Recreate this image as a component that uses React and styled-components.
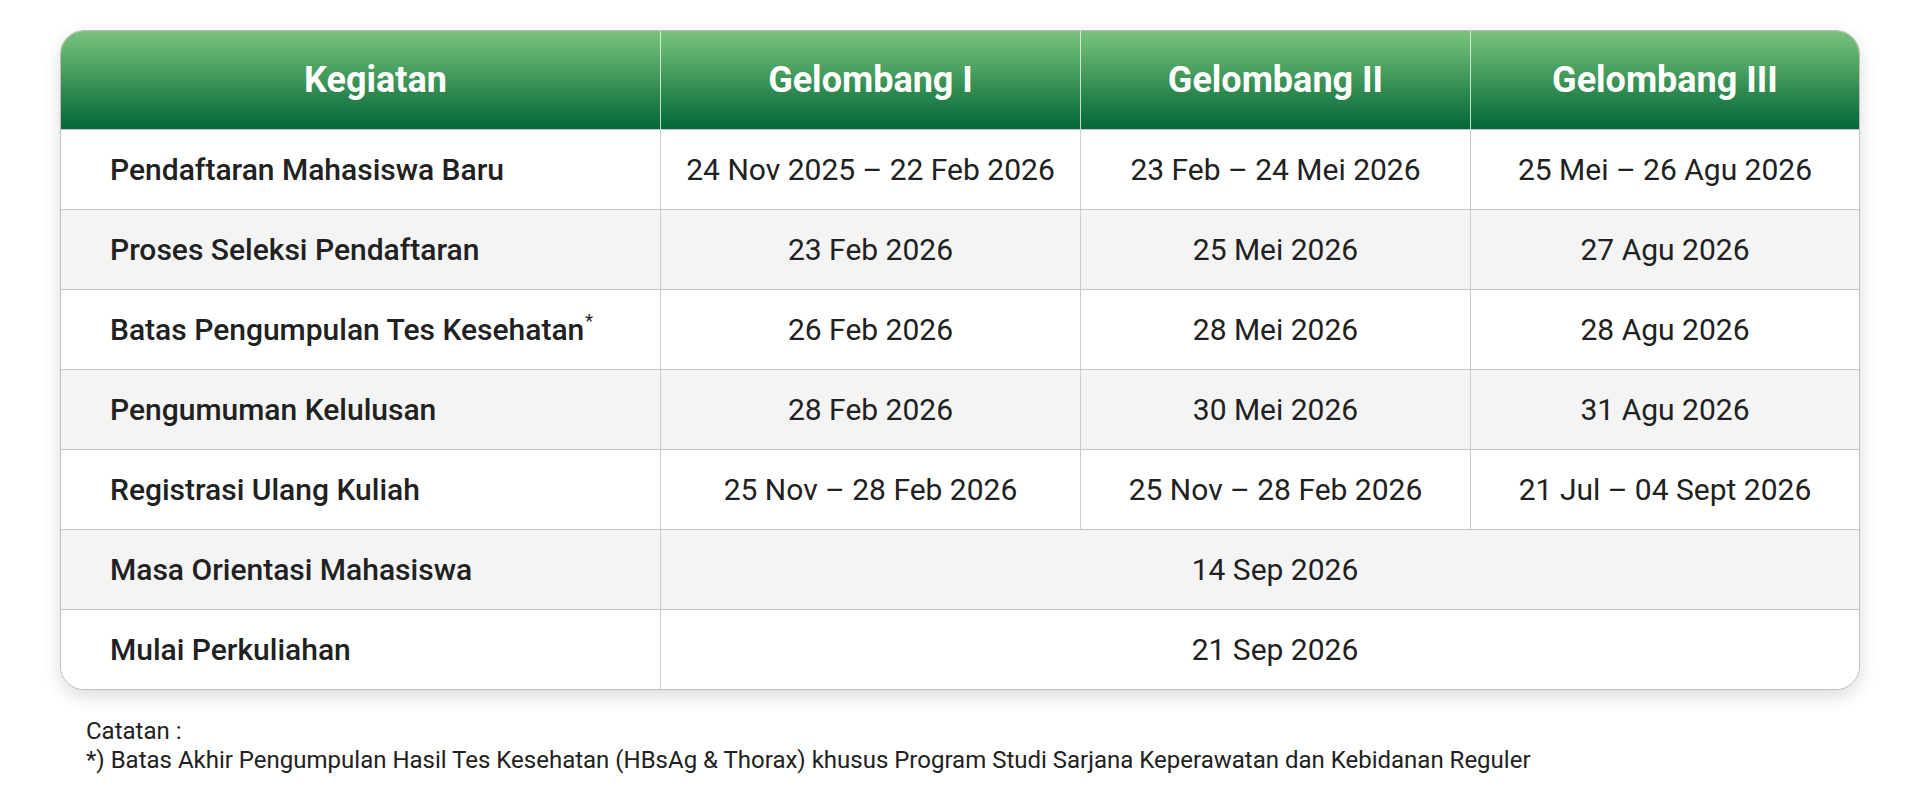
import React from "react";
import styled, { createGlobalStyle } from "styled-components";

const Global = createGlobalStyle`
  html, body { margin: 0; padding: 0; background: #ffffff; }
  body { font-family: Roboto, "Noto Sans", Arial, sans-serif; color: #212121; }
`;

const Page = styled.div`
  padding: 30px 60px 0 60px;
  width: 1800px;
`;

const Card = styled.div`
  border: 1px solid #bdbdbd;
  border-radius: 24px;
  overflow: hidden;
  background: #ffffff;
  box-shadow: 0 6px 18px rgba(0, 0, 0, 0.14);
`;

const Table = styled.table`
  width: 100%;
  border-collapse: separate;
  border-spacing: 0;
  table-layout: fixed;
`;

const HeadRow = styled.tr`
  height: 98px;
  background: linear-gradient(180deg, #7ac27c 0%, #4fa463 35%, #1f7d47 75%, #04663a 100%);
`;

const HeadCell = styled.th`
  padding: ${(p) => (p.$first ? "0 20px 0 50px" : "0 10px")};
  border-left: ${(p) => (p.$first ? "none" : "1px solid rgba(230, 240, 230, 0.85)")};
  color: #ffffff;
  font-family: Roboto, Arial, sans-serif;
  font-weight: 700;
  font-size: 36px;
  text-align: center;
  vertical-align: middle;
`;

const Row = styled.tr`
  height: 80px;
  background: ${(p) => (p.$alt ? "#f4f4f4" : "#ffffff")};
`;

const LabelCell = styled.td`
  padding: 0 20px 0 49px;
  border-top: 1px solid #c4c4c4;
  font-weight: 500;
  font-size: 30px;
  color: #212121;
  text-align: left;
  vertical-align: middle;
  white-space: nowrap;
`;

const DateCell = styled.td`
  padding: ${(p) => (p.$wide ? "0 20px 0 50px" : "0 10px")};
  border-top: 1px solid #c4c4c4;
  border-left: 1px solid #cccccc;
  font-weight: 400;
  font-size: 30px;
  color: #212121;
  text-align: center;
  vertical-align: middle;
  white-space: nowrap;
`;

const Star = styled.sup`
  font-size: 18px;
  font-weight: 400;
  vertical-align: top;
  position: relative;
  top: -2px;
  margin-left: 1px;
`;

const Notes = styled.div`
  padding: 27px 0 0 26px;
  font-size: 24px;
  line-height: 29px;
  color: #212121;
`;

const rows = [
  { label: "Pendaftaran Mahasiswa Baru", d: ["24 Nov 2025 – 22 Feb 2026", "23 Feb – 24 Mei 2026", "25 Mei – 26 Agu 2026"] },
  { label: "Proses Seleksi Pendaftaran", d: ["23 Feb 2026", "25 Mei 2026", "27 Agu 2026"] },
  { label: "Batas Pengumpulan Tes Kesehatan", star: true, d: ["26 Feb 2026", "28 Mei 2026", "28 Agu 2026"] },
  { label: "Pengumuman Kelulusan", d: ["28 Feb 2026", "30 Mei 2026", "31 Agu 2026"] },
  { label: "Registrasi Ulang Kuliah", d: ["25 Nov – 28 Feb 2026", "25 Nov – 28 Feb 2026", "21 Jul – 04 Sept 2026"] },
  { label: "Masa Orientasi Mahasiswa", all: "14 Sep 2026" },
  { label: "Mulai Perkuliahan", all: "21 Sep 2026" },
];

export default function App() {
  return (
    <>
      <Global />
      <Page>
        <Card>
          <Table>
            <colgroup>
              <col style={{ width: "599px" }} />
              <col style={{ width: "420px" }} />
              <col style={{ width: "390px" }} />
              <col style={{ width: "389px" }} />
            </colgroup>
            <thead>
              <HeadRow>
                <HeadCell $first>Kegiatan</HeadCell>
                <HeadCell>Gelombang I</HeadCell>
                <HeadCell>Gelombang II</HeadCell>
                <HeadCell>Gelombang III</HeadCell>
              </HeadRow>
            </thead>
            <tbody>
              {rows.map((r, i) => (
                <Row key={r.label} $alt={i % 2 === 1}>
                  <LabelCell>
                    {r.label}
                    {r.star && <Star>*</Star>}
                  </LabelCell>
                  {r.all ? (
                    <DateCell colSpan={3} $wide>
                      {r.all}
                    </DateCell>
                  ) : (
                    r.d.map((v, j) => <DateCell key={j}>{v}</DateCell>)
                  )}
                </Row>
              ))}
            </tbody>
          </Table>
        </Card>
        <Notes>
          <div>Catatan :</div>
          <div>*) Batas Akhir Pengumpulan Hasil Tes Kesehatan (HBsAg &amp; Thorax) khusus Program Studi Sarjana Keperawatan dan Kebidanan Reguler</div>
        </Notes>
      </Page>
    </>
  );
}
